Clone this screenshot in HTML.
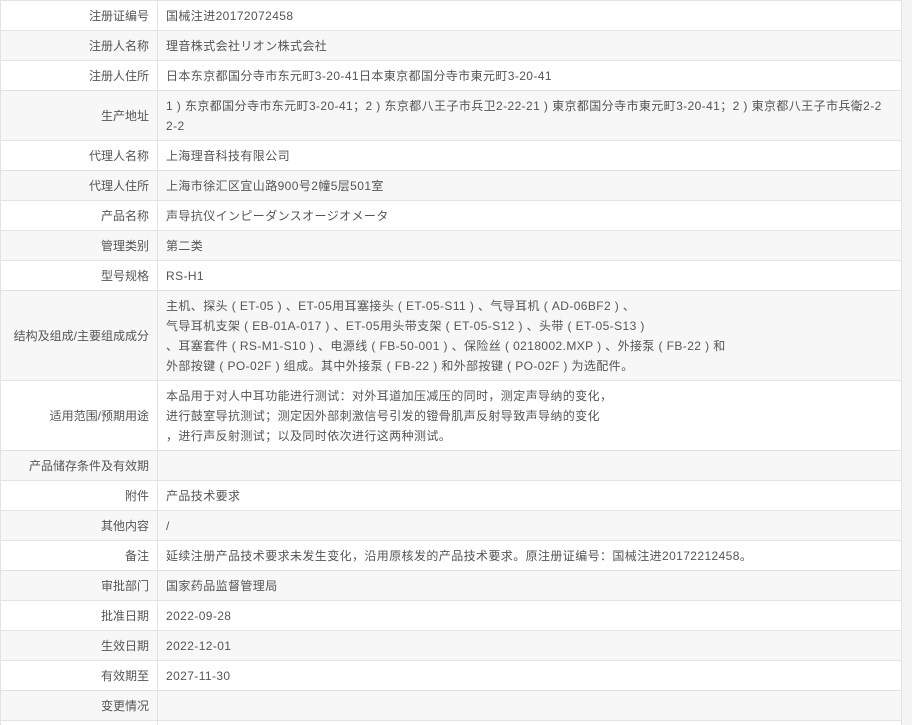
<!DOCTYPE html>
<html><head><meta charset="utf-8"><style>
html,body{margin:0;padding:0;background:#fff;width:912px;height:725px;overflow:hidden}
body{font-family:"Liberation Sans","Noto Sans CJK SC",sans-serif;font-size:12px;color:#555;letter-spacing:0.4px}
.side{position:absolute;left:902px;top:0;width:10px;height:725px;background:#f4f4f4}
table{border-collapse:collapse;width:902px;table-layout:fixed;margin-top:0}
td{border:1px solid #e3e3e3;padding:4.5px 8px;line-height:20px;vertical-align:middle}
td.l{width:140px;text-align:right;padding-right:8px;letter-spacing:0}
tr:nth-child(even) td{background:#f7f7f7}
.e{height:20px}
</style></head><body>
<div class="side"></div>
<table>
<tr><td class="l">注册证编号</td><td>国械注进20172072458</td></tr>
<tr><td class="l">注册人名称</td><td>理音株式会社リオン株式会社</td></tr>
<tr><td class="l">注册人住所</td><td>日本东京都国分寺市东元町3-20-41日本東京都国分寺市東元町3-20-41</td></tr>
<tr><td class="l">生产地址</td><td>1 ) 东京都国分寺市东元町3-20-41；2 ) 东京都八王子市兵卫2-22-21 ) 東京都国分寺市東元町3-20-41；2 ) 東京都八王子市兵衛2-2<br>2-2</td></tr>
<tr><td class="l">代理人名称</td><td>上海理音科技有限公司</td></tr>
<tr><td class="l">代理人住所</td><td>上海市徐汇区宜山路900号2幢5层501室</td></tr>
<tr><td class="l">产品名称</td><td>声导抗仪インピーダンスオージオメータ</td></tr>
<tr><td class="l">管理类别</td><td>第二类</td></tr>
<tr><td class="l">型号规格</td><td>RS-H1</td></tr>
<tr><td class="l">结构及组成/主要组成成分</td><td>主机、探头 ( ET-05 ) 、ET-05用耳塞接头 ( ET-05-S11 ) 、气导耳机 ( AD-06BF2 ) 、<br>气导耳机支架 ( EB-01A-017 ) 、ET-05用头带支架 ( ET-05-S12 ) 、头带 ( ET-05-S13 )<br>、耳塞套件 ( RS-M1-S10 ) 、电源线 ( FB-50-001 ) 、保险丝 ( 0218002.MXP ) 、外接泵 ( FB-22 ) 和<br>外部按键 ( PO-02F ) 组成。其中外接泵 ( FB-22 ) 和外部按键 ( PO-02F ) 为选配件。</td></tr>
<tr><td class="l">适用范围/预期用途</td><td>本品用于对人中耳功能进行测试：对外耳道加压减压的同时，测定声导纳的变化，<br>进行鼓室导抗测试；测定因外部刺激信号引发的镫骨肌声反射导致声导纳的变化<br>，进行声反射测试；以及同时依次进行这两种测试。</td></tr>
<tr><td class="l e">产品储存条件及有效期</td><td></td></tr>
<tr><td class="l">附件</td><td>产品技术要求</td></tr>
<tr><td class="l">其他内容</td><td>/</td></tr>
<tr><td class="l">备注</td><td>延续注册产品技术要求未发生变化，沿用原核发的产品技术要求。原注册证编号：国械注进20172212458。</td></tr>
<tr><td class="l">审批部门</td><td>国家药品监督管理局</td></tr>
<tr><td class="l">批准日期</td><td>2022-09-28</td></tr>
<tr><td class="l">生效日期</td><td>2022-12-01</td></tr>
<tr><td class="l">有效期至</td><td>2027-11-30</td></tr>
<tr><td class="l e">变更情况</td><td></td></tr>
<tr><td class="l e"></td><td></td></tr>
</table>
</body></html>
